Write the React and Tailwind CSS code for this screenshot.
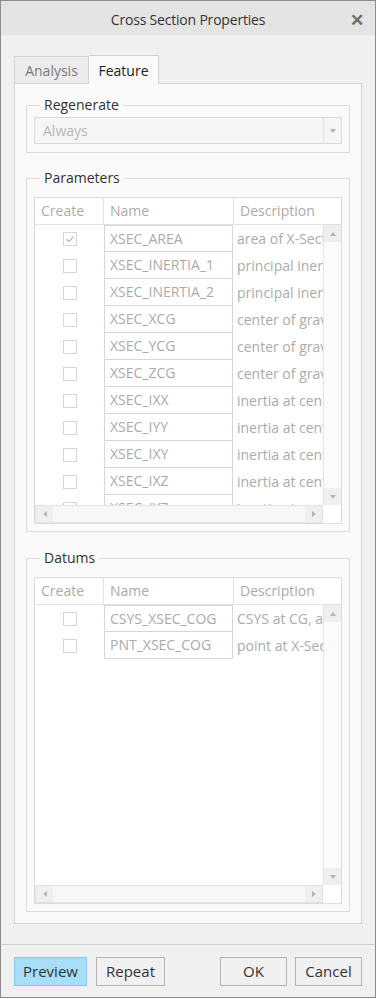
import React from "react";

const params = [
  { name: "XSEC_AREA", desc: "area of X-Section", checked: true },
  { name: "XSEC_INERTIA_1", desc: "principal inertia 1" },
  { name: "XSEC_INERTIA_2", desc: "principal inertia 2" },
  { name: "XSEC_XCG", desc: "center of gravity x" },
  { name: "XSEC_YCG", desc: "center of gravity y" },
  { name: "XSEC_ZCG", desc: "center of gravity z" },
  { name: "XSEC_IXX", desc: "inertia at center xx" },
  { name: "XSEC_IYY", desc: "inertia at center yy" },
  { name: "XSEC_IXY", desc: "inertia at center xy" },
  { name: "XSEC_IXZ", desc: "inertia at center xz" },
  { name: "XSEC_IYZ", desc: "inertia at center yz" },
];

const datums = [
  { name: "CSYS_XSEC_COG", desc: "CSYS at CG, aligned" },
  { name: "PNT_XSEC_COG", desc: "point at X-Section CG" },
];

const Arrow = ({ dir }) => {
  const paths = {
    up: "M1 5 L4 1 L7 5 Z",
    down: "M1 1 L4 5 L7 1 Z",
    left: "M5 1 L1 4 L5 7 Z",
    right: "M1 1 L5 4 L1 7 Z",
  };
  const vertical = dir === "up" || dir === "down";
  return (
    <svg width={vertical ? 8 : 6} height={vertical ? 6 : 8} viewBox={vertical ? "0 0 8 6" : "0 0 6 8"}>
      <path d={paths[dir]} fill="#b4b4b4" />
    </svg>
  );
};

const Checkbox = ({ checked }) => (
  <div className="w-[14px] h-[14px] border border-[#d6d6d6] bg-white flex items-center justify-center">
    {checked && (
      <svg width="10" height="10" viewBox="0 0 10 10">
        <path d="M1.5 5.2 L4 7.6 L8.6 2.4" fill="none" stroke="#b8b8b8" strokeWidth="1.2" />
      </svg>
    )}
  </div>
);

const Group = ({ label, children, className }) => (
  <fieldset className={`min-w-0 border border-[#dadada] mx-[11px] px-[7px] ${className}`}>
    <legend className="ml-[6px] px-[4px] leading-[20px] text-[14px] text-[#333]">{label}</legend>
    {children}
  </fieldset>
);

const Table = ({ rows }) => (
  <div className="border border-[#dcdcdc] bg-white h-[327px] flex flex-col overflow-hidden text-[14px] text-[#ababab]">
    <div className="h-[27px] flex border-b border-[#e2e2e2] shrink-0">
      <div className="w-[69px] shrink-0 border-r border-[#e2e2e2] pl-[6px] leading-[26px]">Create</div>
      <div className="w-[130px] shrink-0 border-r border-[#e2e2e2] pl-[6px] leading-[26px]">Name</div>
      <div className="flex-1 min-w-0 pl-[6px] leading-[26px] whitespace-nowrap overflow-hidden">Description</div>
    </div>
    <div className="h-[280px] flex shrink-0">
      <div className="flex-1 min-w-0 overflow-hidden">
        {rows.map((r, i) => (
          <div key={r.name} className="h-[27px] flex">
            <div className="w-[69px] shrink-0 flex items-center justify-center">
              <Checkbox checked={r.checked} />
            </div>
            <div
              className={`w-[129px] shrink-0 h-[27px] border-x border-b border-[#d6d6d6] pl-[5px] leading-[26px] whitespace-nowrap ${
                i === 0 ? "border-t" : ""
              }`}
            >
              {r.name}
            </div>
            <div className="flex-1 min-w-0 pl-[4px] leading-[27px] whitespace-nowrap overflow-hidden">{r.desc}</div>
          </div>
        ))}
      </div>
      <div className="w-[18px] shrink-0 border-l border-[#e4e4e4] bg-[#fbfbfb] flex flex-col justify-between">
        <div className="h-[17px] bg-[#efefef] flex items-center justify-center">
          <Arrow dir="up" />
        </div>
        <div className="h-[17px] bg-[#efefef] flex items-center justify-center">
          <Arrow dir="down" />
        </div>
      </div>
    </div>
    <div className="h-[18px] flex shrink-0">
      <div className="flex-1 min-w-0 flex border border-[#e2e2e2] bg-[#f7f7f7] justify-between">
        <div className="w-[17px] bg-[#efefef] flex items-center justify-center">
          <Arrow dir="left" />
        </div>
        <div className="w-[17px] bg-[#efefef] flex items-center justify-center">
          <Arrow dir="right" />
        </div>
      </div>
      <div className="w-[18px] shrink-0 bg-white" />
    </div>
  </div>
);

const Button = ({ children, className }) => (
  <button className={`h-[29px] border text-[15px] text-[#333] ${className}`}>{children}</button>
);

export default function App() {
  return (
    <div
      className="w-[376px] h-[998px] border border-[#8c8c8c] bg-[#f0f0f0] flex flex-col"
      style={{ fontFamily: '"Open Sans", "Noto Sans", sans-serif' }}
    >
      <div className="h-[34px] pt-[3px] bg-[#e4e4e4] relative flex items-center justify-center shrink-0">
        <span className="text-[14px] tracking-[-0.2px] text-[#333]">Cross Section Properties</span>
        <span className="absolute right-[11px] top-[10px] text-[17px] font-bold text-[#6e6e6e] leading-[18px]">✕</span>
      </div>

      <div className="px-[13px] pt-[20px] flex flex-col">
        <div className="h-[28px] flex items-end text-[14px]">
          <div className="w-[75px] h-[27px] border border-b-0 border-[#d4d4d4] bg-[#ececec] text-[#7a7a7a] flex items-center justify-center">
            Analysis
          </div>
          <div className="w-[70px] h-[29px] -mb-px relative z-10 border border-b-0 border-l-0 border-[#d4d4d4] bg-[#fafafa] text-[#222] flex items-center justify-center">
            Feature
          </div>
        </div>
        <div className="h-[841px] border border-[#d4d4d4] bg-[#fafafa] pt-[11px]">
          <Group label="Regenerate" className="pt-[2px] pb-[8px]">
            <div className="h-[27px] border border-[#d9d9d9] bg-[#f5f5f5] flex">
              <div className="flex-1 pl-[8px] leading-[25px] text-[14px] text-[#b6b6b6]">Always</div>
              <div className="w-[18px] border-l border-[#e0e0e0] flex items-center justify-center">
                <Arrow dir="down" />
              </div>
            </div>
          </Group>
          <Group label="Parameters" className="mt-[15px] pt-[9px] pb-[7px]">
            <Table rows={params} />
          </Group>
          <Group label="Datums" className="mt-[16px] pt-[9px] pb-[7px]">
            <Table rows={datums} />
          </Group>
        </div>
      </div>

      <div className="mt-[20px] border-t border-[#d0d0d0] px-[13px] pt-[12px] flex">
        <Button className="w-[73px] bg-[#a9def8] border-[#7ecaf0]">Preview</Button>
        <Button className="w-[69px] ml-[9px] bg-[#f0f0f0] border-[#b4b4b4]">Repeat</Button>
        <div className="flex-1" />
        <Button className="w-[67px] bg-[#f0f0f0] border-[#b4b4b4]">OK</Button>
        <Button className="w-[67px] ml-[8px] bg-[#f0f0f0] border-[#b4b4b4]">Cancel</Button>
      </div>
    </div>
  );
}
